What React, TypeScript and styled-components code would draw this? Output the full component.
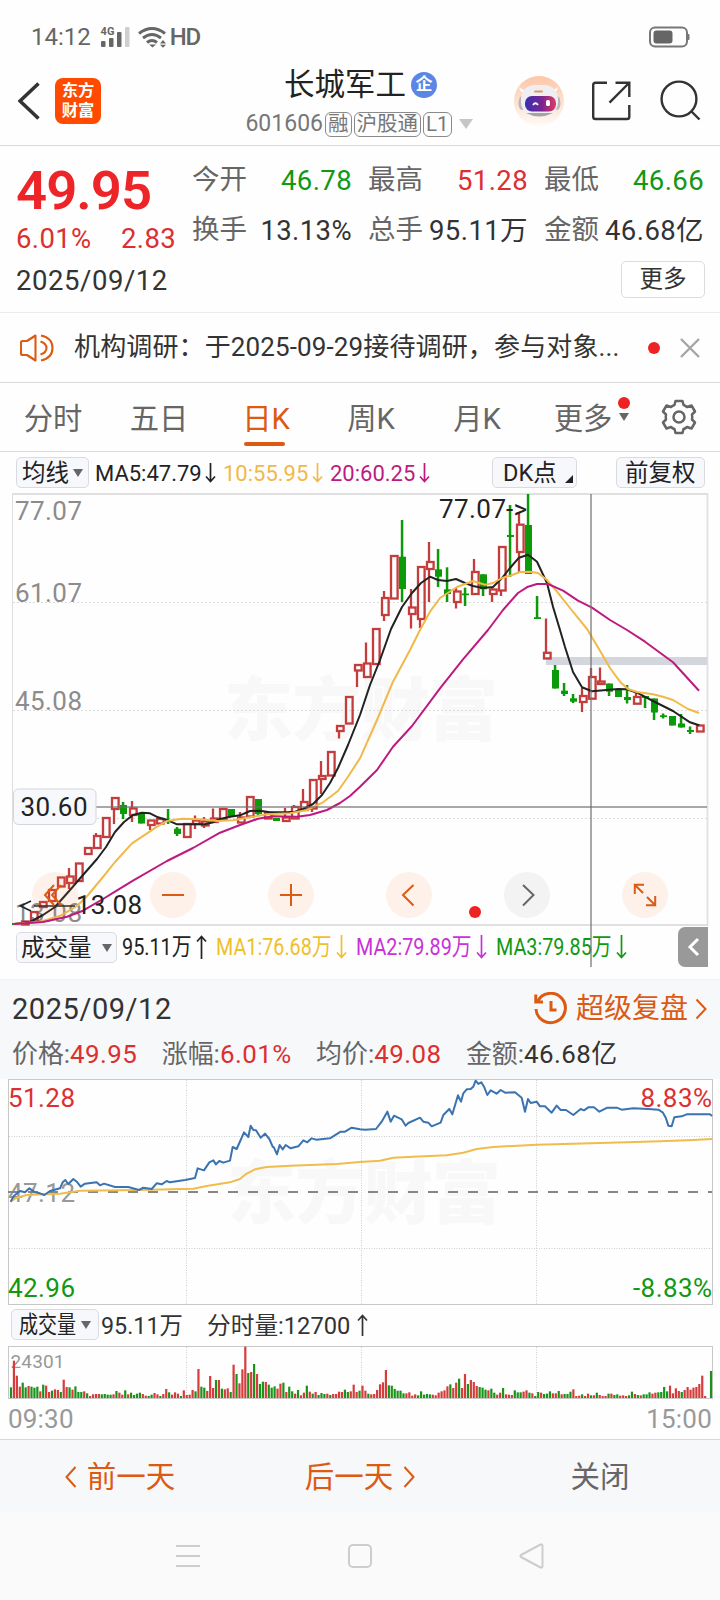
import React from "react";
import styled, { createGlobalStyle, css } from "styled-components";

const ORANGE = "#dc5a12";
const RED = "#dc3030";
const GREEN = "#129812";
const INK = "#333333";
const SUB = "#666666";
const FAINT = "#8c8c8c";
const FONT = `Roboto, "Noto Sans CJK SC", sans-serif`;

const GlobalStyle = createGlobalStyle`
  * { box-sizing: border-box; }
  body { margin: 0; background: #fff; font-family: ${FONT}; color: ${INK}; }
  svg { display: block; flex: none; }
  svg text { font-family: ${FONT}; }
`;

const Screen = styled.main`
  width: 720px;
  height: 1600px;
  display: flex;
  flex-direction: column;
  overflow: hidden;
  background: #fefefe;
`;

/* ---------- status bar ---------- */

const StatusBar = styled.div`
  height: 72px;
  padding: 1px 30px 0 31px;
  display: flex;
  align-items: center;
  color: #666;
  font-size: 24px;
  line-height: 28px;
`;
const StatusIcons = styled.svg`
  margin-left: 9px;
`;
const NetLabel = styled.span`
  margin-left: 2px;
  letter-spacing: -1.2px;
  font-weight: 500;
  flex: 1;
`;

/* ---------- header ---------- */

const Header = styled.header`
  height: 74px;
  border-bottom: 1px solid #d9d9d9;
  display: grid;
  grid-template-columns: 202px 312px 206px;
`;
const HeaderLeft = styled.div`
  display: flex;
  padding: 6px 0 0 18px;
  gap: 15px;
`;
const AppLogo = styled.div`
  width: 46px;
  height: 46px;
  border-radius: 8px;
  background: #ff4a00;
  color: #fff;
  font-size: 16.3px;
  line-height: 19.5px;
  font-weight: 700;
  text-align: center;
  padding-top: 3px;
`;
const TitleBlock = styled.div`
  display: flex;
  flex-direction: column;
  align-items: center;
`;
const TitleRow = styled.div`
  height: 36px;
  margin-top: -5px;
  padding-left: 5px;
  display: flex;
  align-items: center;
  gap: 5px;
  font-size: 30.5px;
  line-height: 36px;
  color: #222;
`;
const Verified = styled.span`
  width: 26px;
  height: 26px;
  border-radius: 50%;
  background: #5b86e6;
  color: #fff;
  font-size: 17px;
  line-height: 25px;
  text-align: center;
  font-weight: 700;
`;
const CodeRow = styled.div`
  height: 26px;
  margin-top: 8px;
  padding-left: 2px;
  display: flex;
  align-items: center;
  gap: 2px;
  font-size: 23px;
  line-height: 26px;
  color: #777;
`;
const Tag = styled.span`
  height: 25px;
  padding: 0 2px;
  border: 1px solid #8a8a8a;
  border-radius: 6px;
  font-size: 20.5px;
  line-height: 23px;
  color: #777;
`;
const HeaderRight = styled.div`
  display: flex;
  align-items: flex-start;
`;

const Triangle = styled.i<{ $w?: number; $h?: number; $c?: string; $ml?: number }>`
  flex: none;
  width: 0;
  height: 0;
  margin-left: ${(p) => p.$ml ?? 0}px;
  border-left: ${(p) => (p.$w ?? 10) / 2}px solid transparent;
  border-right: ${(p) => (p.$w ?? 10) / 2}px solid transparent;
  border-top: ${(p) => p.$h ?? 8}px solid ${(p) => p.$c ?? SUB};
`;

/* ---------- quote ---------- */

const Quote = styled.section`
  height: 167px;
  border-bottom: 1px solid #ebebeb;
  padding: 0 16px;
  display: grid;
  grid-template-columns: 176px 512px;
`;
const PriceCol = styled.div`
  display: flex;
  flex-direction: column;
`;
const Price = styled.div`
  font-size: 54.5px;
  line-height: 60px;
  font-weight: 600;
  letter-spacing: -1px;
  color: #ee2528;
  margin-top: 14px;
`;
const ChangeRow = styled.div`
  display: flex;
  justify-content: space-between;
  width: 160px;
  margin-top: 3px;
  font-size: 27.5px;
  line-height: 32px;
  letter-spacing: 0.35px;
  color: ${RED};
`;
const QuoteDate = styled.div`
  font-size: 27.5px;
  line-height: 32px;
  letter-spacing: 0.55px;
  margin-top: 10px;
`;
const StatsCol = styled.div`
  display: flex;
  flex-direction: column;
  align-items: flex-end;
`;
const Stats = styled.div`
  width: 512px;
  margin-top: 18px;
  display: grid;
  grid-template-columns: repeat(3, 160px);
  column-gap: 16px;
  row-gap: 18px;
`;
const Stat = styled.div`
  height: 32px;
  display: flex;
  justify-content: space-between;
  font-size: 27.5px;
  line-height: 32px;
  white-space: nowrap;
`;
const StatLabel = styled.span`
  color: ${SUB};
`;
const StatValue = styled.span<{ $c?: string }>`
  color: ${(p) => p.$c ?? INK};
  padding-top: 1px;
  letter-spacing: 0.4px;
`;
const MoreButton = styled.button`
  width: 84px;
  height: 37px;
  margin: 15px -1px 0 0;
  padding: 0;
  border: 1px solid #dcdcdc;
  border-radius: 5px;
  background: #fff;
  font: 23.5px/33px ${FONT};
  color: ${INK};
`;

/* ---------- notice ---------- */

const Notice = styled.section`
  height: 70px;
  border-bottom: 1px solid #d9d9d9;
  padding: 0 20px;
  display: flex;
  align-items: center;
`;
const NoticeText = styled.p`
  margin: -2px 0 0 20px;
  width: 574px;
  font-size: 26px;
  line-height: 34px;
  letter-spacing: 0.13px;
  white-space: nowrap;
`;
const Dot = styled.i`
  width: 12px;
  height: 12px;
  border-radius: 50%;
  background: #ee2222;
`;
const CloseIcon = styled.svg`
  margin-left: 20px;
`;

/* ---------- tabs ---------- */

const Tabs = styled.nav`
  height: 69px;
  border-bottom: 1px solid #d9d9d9;
  display: grid;
  grid-template-columns: repeat(6, 106px) 1fr;
`;
const Tab = styled.div<{ $active?: boolean }>`
  position: relative;
  display: flex;
  flex-direction: column;
  align-items: center;
  font-size: 29.3px;
  line-height: 36px;
  padding-top: 18px;
  color: ${(p) => (p.$active ? ORANGE : SUB)};
  ${(p) =>
    p.$active &&
    css`
      padding-left: 2px;
      &::after {
        content: "";
        width: 41px;
        height: 4px;
        margin: 5px 3px 0 0;
        border-radius: 2px;
        background: ${ORANGE};
      }
    `}
`;
const TabMark = styled.span`
  position: absolute;
  left: 88px;
  top: 14px;
  display: flex;
  flex-direction: column;
  align-items: center;
  gap: 4px;
`;
const TabGear = styled.div`
  padding: 16px 0 0 25px;
`;

/* ---------- legends ---------- */

const Legend = styled.div<{ $h: number; $left?: number }>`
  position: relative;
  height: ${(p) => p.$h}px;
  padding-left: ${(p) => p.$left ?? 16}px;
  display: flex;
  align-items: flex-start;
`;
const Chip = styled.button<{ $w: number; $mt: number; $ml?: number; $pad?: number }>`
  flex: none;
  width: ${(p) => p.$w}px;
  height: 31px;
  margin: ${(p) => p.$mt}px 0 0 ${(p) => p.$ml ?? 0}px;
  padding: 0 ${(p) => p.$pad ?? 5}px;
  border: 1px solid #d9dbe1;
  border-radius: 5px;
  background: #f7f8fb;
  display: flex;
  align-items: center;
  justify-content: space-between;
  font: 23.5px/28px ${FONT};
  color: #222;
  white-space: nowrap;
`;
const ChipLabel = styled.span`
  margin-left: 7px;
`;
const Corner = styled.i`
  width: 0;
  height: 0;
  margin-top: 13px;
  border-left: 8px solid transparent;
  border-bottom: 8px solid #222;
`;
const Item = styled.span<{ $w: number; $c: string; $mt: number; $ml?: number; $scale?: number; $size?: number }>`
  flex: none;
  width: ${(p) => p.$w}px;
  margin-top: ${(p) => p.$mt}px;
  margin-left: ${(p) => p.$ml ?? 0}px;
  color: ${(p) => p.$c};
  font-size: ${(p) => p.$size ?? 22}px;
  line-height: 30px;
  white-space: nowrap;
  ${(p) =>
    p.$scale &&
    css`
      transform: scaleX(${p.$scale});
      transform-origin: left center;
    `}
`;
const Squeeze = styled.span`
  width: 56px;
  transform: scaleX(0.81);
  transform-origin: left center;
`;
const ArrowSvg = styled.svg<{ $mt: number; $mr: number }>`
  margin: ${(p) => p.$mt}px ${(p) => p.$mr}px 0 0;
`;

function Arrow({ up, c, mt, mr = 9, h = 20 }: { up?: boolean; c: string; mt: number; mr?: number; h?: number }) {
  const d = up ? `M5.5 ${h} V1.5 M1 6.5 L5.5 1.5 L10 6.5` : `M5.5 0 V${h - 1.5} M1 ${h - 6.5} L5.5 ${h - 1.5} L10 ${h - 6.5}`;
  return (
    <ArrowSvg $mt={mt} $mr={mr} width="11" height={h} fill="none" stroke={c} strokeWidth="1.7">
      <path d={d} />
    </ArrowSvg>
  );
}

/* ---------- candle chart ---------- */

const ChartWrap = styled.div`
  position: relative;
  height: 432px;
`;
const ChartSvg = styled.svg`
  position: relative;
  z-index: 1;
  overflow: visible;
  pointer-events: none;
`;
const Tools = styled.div`
  position: absolute;
  z-index: 2;
  left: 32px;
  right: 52px;
  bottom: 8px;
  display: flex;
  justify-content: space-between;
`;
const Tool = styled.span<{ $muted?: boolean }>`
  width: 46px;
  height: 46px;
  border-radius: 50%;
  background: ${(p) => (p.$muted ? "rgba(120,120,120,.08)" : "rgba(248,130,60,.105)")};
  color: ${(p) => (p.$muted ? SUB : ORANGE)};
`;
const ToolDot = styled(Dot)`
  position: absolute;
  z-index: 2;
  left: 469px;
  bottom: 8px;
`;
const Drawer = styled.span`
  position: absolute;
  left: 678px;
  top: 1px;
  width: 30px;
  height: 40px;
  border-radius: 7px 0 0 7px;
  background: #999;
`;

type Candle = [string, number, number, number?, number?];
// [direction, body top, body bottom, high, low]
const candles: Candle[] = [
  ["g", 923, 925], ["r", 921.5, 924.5], ["r", 912, 922], ["r", 902, 907], ["r", 890, 901],
  ["r", 877.5, 886.5], ["r", 876.5, 883, 868, 889], ["r", 863.5, 881], ["r", 848, 854], ["r", 836, 848, 833],
  ["r", 818, 837], ["r", 798, 809, 0, 824], ["g", 805, 814, 802, 819], ["r", 808.5, 815, 801, 822], ["g", 813.5, 823.5],
  ["r", 820.5, 825, 0, 830], ["r", 819, 823.5], ["g", 820.3, 822, 809, 824], ["g", 828.7, 834, 827, 836], ["r", 824, 837],
  ["r", 820.5, 824, 815.5, 829], ["r", 821.5, 825.5, 817, 828], ["r", 818.5, 822, 808.5], ["r", 809, 819.5], ["g", 809, 816],
  ["r", 817.5, 822.5, 812], ["r", 797, 816.5], ["g", 799, 814, 0, 816], ["r", 813, 818.5], ["g", 818, 821],
  ["r", 817.5, 821, 808], ["r", 807, 818.5, 805], ["r", 802, 810, 789], ["r", 780, 808.5, 0, 812], ["r", 776, 779, 761, 794],
  ["r", 752, 775.5], ["r", 726, 731, 0, 738.5], ["r", 697, 723.5], ["r", 665, 670.5, 0, 687], ["r", 663.5, 677, 642.5],
  ["r", 629, 664], ["r", 598, 615, 591, 621], ["r", 556, 598.5], ["g", 556.7, 589, 520, 602], ["r", 607.5, 614, 589, 628.5],
  ["r", 567, 619, 0, 628], ["r", 562, 569, 542, 602], ["g", 569.3, 576.7, 549, 587], ["g", 589.3, 594, 567.3, 602], ["r", 591.5, 602, 588, 608.5],
  ["g", 593.5, 595.2, 587.7, 606], ["r", 572, 594, 559], ["g", 574.3, 589.3, 0, 596], ["r", 589.5, 594, 587, 602], ["r", 547, 590.5, 0, 596],
  ["g", 535, 537, 505, 577], ["r", 524.7, 552, 512, 573], ["g", 525, 574, 494], ["g", 617.2, 619, 596], ["r", 652.8, 658.5, 618.5],
  ["g", 670, 688.5, 665], ["g", 690.7, 694, 683, 696], ["g", 698.3, 701.7, 694, 703], ["r", 696, 702, 688, 712], ["r", 677, 698.7, 668],
  ["r", 681.5, 684, 667.5], ["g", 683.5, 691.7, 0, 696], ["g", 690, 697], ["g", 697, 700, 685, 703.5], ["r", 697, 703.7, 691],
  ["g", 696, 698, 0, 708], ["g", 698.5, 712.5, 0, 720], ["g", 715.3, 717, 713.5, 718.5], ["g", 716, 725.5], ["g", 723.5, 727.5, 714],
  ["g", 730, 732, 726.5, 734], ["r", 725.5, 731.5, 724],
];

const MA5 =
  "14,924 30,922 43,915 55,907 70,890 83,875 97,859 106,847 115,832 124,822 133,815 142,812.7 150,813.3 158,817.3 168,820.3 177,824.3 205,824.3 213,822.3 220,819 230,816.7 240,815.3 250,811 260,810.7 270,812.3 287,812.3 295,811.7 303,809 313,804 322,795 330,783 338,768 348,745 360,715 370,685 380,660 391,629 402,607 412,593 421,583 430,576.7 438,580 447,581 456,579 465,583 473,586 483,588 493,587 502,578 510,568 519,557.7 528,554.7 537,561.7 547,583 553,606.7 560,630 565,647 573,672 582,687.3 592,691.3 618,689 627,689.3 637,692.7 653,701 673,711 690,722.3 699,725.3";
const MA10 =
  "14,924 40,921.7 60,916 77,906 88,895 103,877 115,862 132,843.3 147,833.3 157,826.7 167,821 182,818.7 200,819.3 217,821 233,820.3 250,817.3 267,814.3 290,813.3 307,810 323,802.3 338,791 348,776.7 360,758.3 377,720 393,681.7 410,650 420,630 430,611.7 440,598 457,587 473,581 485,584.7 493,583 502,578 510,575.7 520,572 530,571.7 538,573 547,580 557,591.7 570,608 587,629 600,650.7 610,668 620,681.7 628,689 637,692 653,694.3 663,696.7 673,700 688,709 699,713";
const MA20 =
  "14,924 43,922 67,916.7 83,910.7 103,899 115,891.7 133,880.7 167,861 193,848 220,832.7 240,825 258,818.7 273,816.3 297,816.7 310,815 327,810 340,803 350,796 360,786.7 377,770 393,746.7 412,726 440,688.3 463,659.3 488,630 503,610 518,593 528,586.7 537,584 548,584 563,590.7 578,600.7 592,607.7 610,620 627,630 645,641.7 673,662.3 699,690.7";

function CandleMark({ c, i }: { c: Candle; i: number }) {
  const [dir, top, bottom, high, low] = c;
  const x = 16 + i * 9;
  const hi = high || top;
  const lo = low || bottom;
  if (dir === "g") {
    return (
      <g fill="#0a9a0a">
        <rect x={x - 2.200} y={hi} width="2.500" height={lo - hi} />
        <rect x={x - 4} y={top} width="7" height={bottom - top} />
      </g>
    );
  }
  return (
    <g fill="none" stroke="#c43c3c" strokeWidth="2.300">
      {hi < top && <path d={`M${x - 1} ${hi} V${top}`} />}
      {lo > bottom && <path d={`M${x - 1} ${bottom} V${lo}`} />}
      <rect x={x - 3} y={top} width="6.6" height={Math.max(bottom - top, 1)} />
    </g>
  );
}

function CandleChart() {
  return (
    <ChartSvg width="720" height="432" viewBox="0 494 720 432">
      <text x="224" y="735" fontSize="69" fontWeight="900" fill="#f8f8f8" textLength="274">东方财富</text>
      <g stroke="#dcdcdc" strokeDasharray="2 2">
        <path d="M13 602.5H707 M13 710.5H707 M13 818.5H707" />
      </g>
      <path d="M12.5 494V925" stroke="#dedede" fill="none" />
      <path d="M12 494H707.5V925H12" stroke="#e0e0e0" strokeWidth="1.8" fill="none" />
      <rect x="546" y="657" width="161" height="8" fill="#d3d6dc" />
      <g fill={FAINT} fontSize="26">
        <text x="15" y="520" textLength="67">77.07</text>
        <text x="15" y="602" textLength="67">61.07</text>
        <text x="15" y="710" textLength="67">45.08</text>
        <text x="15" y="921.5" textLength="67">13.08</text>
      </g>
      {candles.map((c, i) => (
        <CandleMark key={i} c={c} i={i} />
      ))}
      <g fill="none" strokeWidth="2" strokeLinejoin="round">
        <polyline points={MA5} stroke="#222" />
        <polyline points={MA10} stroke="#f0b94a" />
        <polyline points={MA20} stroke="#bd1a80" />
      </g>
      <g fill="#222" fontSize="26">
        <text x="439" y="517.7" textLength="67">77.07</text>
        <text x="506" y="517.7" textLength="21">-&gt;</text>
        <text x="76" y="914" textLength="66">13.08</text>
      </g>
      <path d="M31 901 L20.500 906 L31 911 M34 906H75" stroke="#222" strokeWidth="1.7" fill="none" />
      <g stroke="#6e6e6e" strokeOpacity=".6" strokeWidth="2">
        <path d="M96 807H707" />
        <path d="M591 494V967" />
      </g>
      <rect x="13.500" y="789" width="82.500" height="35.500" rx="5" fill="#f7f8fb" stroke="#d4d6dc" />
      <text x="20.500" y="815.5" fontSize="26" fill="#222" textLength="67">30.60</text>
    </ChartSvg>
  );
}

const toolIcons: { d: string; muted?: boolean }[] = [
  { d: "M22 13 L13 23 L22 33 M29 13 L20 23 L29 33" },
  { d: "M12 23H34" },
  { d: "M12 23H34 M23 12V34" },
  { d: "M27.500 13 L17 23 L27.500 33.500" },
  { d: "M19 13 L29.500 23 L19 33.500", muted: true },
  { d: "M12.800 22V12.800H22 M13 13L21 21 M33.200 24V33.200H24 M33 33L25 25" },
];

/* ---------- replay section ---------- */

const ReplayHead = styled.section`
  height: 100px;
  padding: 10px 13px 0 12px;
  background: #f7f8fa;
  border-top: 1px solid #f2f2f4;
`;
const ReplayTop = styled.div`
  height: 38px;
  display: flex;
  align-items: center;
`;
const ReplayDate = styled.span`
  flex: 1;
  font-size: 29px;
  letter-spacing: 0.55px;
`;
const ReplayLink = styled.span`
  display: flex;
  align-items: center;
  gap: 9px;
  font-size: 28px;
  line-height: 36px;
  color: ${ORANGE};
`;
const LinkChevron = styled.svg`
  margin-left: -2px;
`;
const ReplayStats = styled.div`
  margin-top: 8px;
  display: flex;
  gap: 24.5px;
  font-size: 25.9px;
  line-height: 36px;
  color: ${SUB};
  white-space: nowrap;
`;
const Val = styled.span<{ $c?: string }>`
  color: ${(p) => p.$c ?? INK};
  letter-spacing: 0.45px;
`;

// Series are given at three units per pixel.
const priceLine =
  "32,680 42,662 60,648 75,652 88,640 105,652 120,655 133,660 150,648 180,640 188,622 196,615 205,627 220,612 232,622 242,635 255,626 290,622 300,631 312,626 345,636 385,636 417,645 430,638 455,642 470,625 485,628 500,618 510,622 555,615 585,609 593,580 612,586 628,562 640,556 648,568 658,558 670,563 690,557 698,516 710,522 722,495 732,472 745,486 752,452 760,465 768,466 782,488 795,476 808,492 818,515 822,518 831,538 839,510 848,523 857,510 872,520 895,514 910,496 922,502 935,490 948,494 990,490 1022,470 1035,470 1055,458 1080,463 1095,464 1128,462 1145,440 1162,410 1172,440 1182,422 1205,433 1217,452 1225,444 1260,428 1270,440 1285,443 1295,454 1322,443 1330,420 1348,402 1357,418 1374,361 1383,380 1390,355 1400,343 1412,342 1420,335 1427,317 1435,327 1444,322 1452,335 1462,360 1472,346 1490,356 1502,345 1515,353 1545,352 1565,368 1575,410 1584,372 1592,384 1610,380 1620,394 1635,394 1655,413 1670,392 1682,405 1698,405 1720,420 1742,402 1752,406 1765,397 1782,397 1798,410 1822,398 1850,398 1865,404 1900,400 1945,402 1975,404 1988,412 1998,430 2005,452 2015,454 2023,427 2045,424 2060,418 2130,418 2136,423";
const avgLine =
  "32,680 50,668 80,660 180,656 240,647 420,645 580,641 620,633 690,622 720,612 735,599 765,583 800,576 870,572 1010,567 1080,561 1140,557 1180,548 1240,545 1340,541 1390,533 1430,522 1480,516 1610,509 1880,502 1980,499 2080,495 2136,492";

function IntradayChart() {
  return (
    <svg width="720" height="226" viewBox="0 1079 720 226">
      <text x="227" y="1217.5" fontSize="69" fontWeight="900" fill="#f8f8f8" textLength="274">东方财富</text>
      <g stroke="#cfcfcf" strokeDasharray="1 1.5">
        <path d="M9 1136.5H712 M9 1248.5H712 M186.500 1080V1304 M361.500 1080V1304 M536.500 1080V1304" />
      </g>
      <rect x="8.500" y="1079.5" width="704" height="225" fill="none" stroke="#c8c8c8" />
      <g fontSize="26">
        <text x="8" y="1106.7" fill={RED} textLength="67">51.28</text>
        <text x="8" y="1202" fill="#999" textLength="67">47.12</text>
        <text x="8" y="1296.7" fill={GREEN} textLength="67">42.96</text>
        <text x="640.500" y="1106.7" fill={RED} textLength="71.500">8.83%</text>
        <text x="633" y="1296.7" fill={GREEN} textLength="79">-8.83%</text>
      </g>
      <path d="M8 1192H712" stroke="#868686" strokeWidth="2" strokeDasharray="10 10" />
      <g transform="translate(0 975) scale(.33333)" fill="none" strokeWidth="6" strokeLinejoin="round">
        <polyline points={avgLine} stroke="#f0bc4c" />
        <polyline points={priceLine} stroke="#3a73b0" />
      </g>
    </svg>
  );
}

const volumes =
  "g32 r112 r67 r34 g46 g32 r36 g34 g31 g34 r20 g40 r37 r18 g22 r26 r24 g18 r55 r33 g32 r25 g35 g18 g18 r20 g14 r6 r11 r12 r12 g11 g12 g10 g10 r11 g21 r16 r10 g23 r11 g16 g9 g13 g16 r12 r7 g6 g10 r15 r11 g6 r12 r27 g17 r10 r17 r13 g6 r23 r9 r10 r24 g20 r87 g34 g31 r21 r66 r30 g54 r54 g28 r26 r29 g18 r100 g72 r44 r86 r154 g75 r78 g102 r72 g42 g49 r48 g40 g31 g35 r28 r43 g46 r18 g34 g20 r13 g24 r8 r16 g37 r19 g13 r18 g9 g15 g12 r13 g9 r12 r12 r19 r18 g25 g18 r20 r40 r18 g22 r37 r22 g13 r11 r12 r24 r41 r47 r84 g38 g37 g27 g22 g22 g14 r14 r17 r7 r11 g8 g20 g10 g12 g11 r10 r8 r16 r20 r23 r35 g41 r30 r46 g58 r30 r72 g42 r54 r48 r36 g33 g31 g25 r23 g28 g16 r10 r16 g30 r11 r10 r9 g23 g17 g17 r19 r23 g16 r14 g6 g18 r16 g12 g13 g20 r14 r14 g21 r11 g12 g12 g19 r26 r6 r7 g11 r6 r13 g8 r8 g16 r9 r6 r6 g13 r13 g9 g11 r7 r8 r6 g8 g19 r12 g9 r8 g11 g11 g17 r13 r16 g17 g18 g33 g20 r37 r14 r29 r21 g18 r24 r33 r25 r31 r33 r42 r67 r6 r0 g81".split(" ");

function VolumeChart() {
  return (
    <svg width="720" height="54" viewBox="0 1346 720 54">
      <path d="M186.500 1347V1398 M361.500 1347V1398 M536.500 1347V1398" stroke="#cfcfcf" strokeDasharray="1 1.5" />
      <rect x="8.500" y="1346.5" width="704" height="52" fill="none" stroke="#c8c8c8" />
      <text x="10.500" y="1368" fontSize="19" fill="#999" textLength="54">24301</text>
      {volumes.map((v, i) => {
        const h = Number(v.slice(1)) / 3;
        return <rect key={i} x={9.900 + i * 2.929} y={1398 - h} width="2.200" height={h} fill={v[0] === "r" ? "#d63c3c" : "#189418"} />;
      })}
    </svg>
  );
}

const AxisRow = styled.div`
  height: 39px;
  padding: 2px 8px 0;
  display: flex;
  justify-content: space-between;
  font-size: 26px;
  line-height: 34px;
  letter-spacing: 0.2px;
  color: #999;
`;

/* ---------- bottom ---------- */

const DayBar = styled.footer`
  height: 73px;
  padding-top: 2px;
  border-top: 1px solid #d6d8db;
  background: #f7f8fa;
  display: grid;
  grid-template-columns: 240px 240px 240px;
  font-size: 29.5px;
  line-height: 36px;
`;
const DayAction = styled.span<{ $muted?: boolean }>`
  display: flex;
  align-items: center;
  justify-content: center;
  gap: 10px;
  color: ${(p) => (p.$muted ? SUB : ORANGE)};
`;
const SystemNav = styled.div`
  height: 88px;
  padding: 0 176px;
  background: #fafafa;
  display: flex;
  align-items: center;
  justify-content: space-between;
`;

export default function App() {
  return (
    <Screen>
      <GlobalStyle />
      <StatusBar>
        <span>14:12</span>
        <StatusIcons width="68" height="22" viewBox="100 25 68 22">
          <text x="100.500" y="34" fontSize="11" fontWeight="700" fill="#666" textLength="14">4G</text>
          <g fill="#666">
            <rect x="101" y="40" width="4.500" height="6" rx="1" />
            <rect x="109" y="37" width="4.500" height="9" rx="1" />
            <rect x="117" y="31" width="4.500" height="15" rx="1" />
            <rect x="125" y="26" width="4.500" height="20" rx="1" fill="#cfcfcf" />
            <path d="M149 43.500h7l-3.500 3z" />
            <path d="M160 42.500l3-3.500 3 3.500z M160 43.800l3 3 3-3z" />
          </g>
          <g fill="none" stroke="#666" strokeWidth="3">
            <path d="M139 32.500Q152 22.500 165 32.500" />
            <path d="M143 37Q152 30 161 37" />
            <path d="M147 41.500Q152 37.500 157 41.500" />
          </g>
        </StatusIcons>
        <NetLabel>HD</NetLabel>
        <svg width="41" height="22" viewBox="0 0 41 22">
          <rect x="1" y="1.500" width="37" height="19" rx="5" fill="none" stroke="#777" strokeWidth="2" />
          <rect x="4.500" y="4.500" width="19" height="13" rx="3" fill="#666" />
          <path d="M38.500 8.500h1.500v5h-1.500z" fill="#777" stroke="#777" />
        </svg>
      </StatusBar>

      <Header>
        <HeaderLeft>
          <svg width="22" height="46" viewBox="18 78 22 46" fill="none" stroke="#333" strokeWidth="3.600">
            <path d="M38.500 83.500 L20 101 L38.500 118.500" />
          </svg>
          <AppLogo>
            东方
            <br />
            财富
          </AppLogo>
        </HeaderLeft>
        <TitleBlock>
          <TitleRow>
            长城军工<Verified>企</Verified>
          </TitleRow>
          <CodeRow>
            <span>601606</span>
            <Tag>融</Tag>
            <Tag>沪股通</Tag>
            <Tag>L1</Tag>
            <Triangle $w={14} $h={10} $c="#c6c6c6" $ml={5} />
          </CodeRow>
        </TitleBlock>
        <HeaderRight>
          <svg width="206" height="60" viewBox="514 72 206 60">
            <defs>
              <linearGradient id="halo" x1="0" y1="0" x2="0" y2="1">
                <stop offset="0" stopColor="#fdc6a6" />
                <stop offset="1" stopColor="#fffaf7" />
              </linearGradient>
              <linearGradient id="visor" x1="0" y1="0" x2="1" y2="0">
                <stop offset="0" stopColor="#3a2fb0" />
                <stop offset=".55" stopColor="#7a2590" />
                <stop offset="1" stopColor="#e23a62" />
              </linearGradient>
            </defs>
            <circle cx="539" cy="101" r="25" fill="url(#halo)" />
            <path d="M519 87q1 6 8 7l6-5q-10 3-14-2z M558 87q-1 6-8 7l-6-5q10 3 14-2z" fill="#fff" />
            <ellipse cx="522" cy="103" rx="3.500" ry="7" fill="#b9b5bd" />
            <ellipse cx="557" cy="103" rx="3.500" ry="7" fill="#b9b5bd" />
            <rect x="521" y="85" width="37" height="31" rx="14" fill="#f1eef1" />
            <path d="M526 113q13 7 27 0z" fill="#a6a2aa" />
            <rect x="534" y="90.500" width="9" height="2" rx="1" fill="#e0965c" />
            <rect x="525" y="96" width="31" height="15.500" rx="7" fill="url(#visor)" />
            <path d="M533 105q2.500-3.500 5 0" fill="none" stroke="#fff" strokeWidth="1.800" />
            <rect x="546" y="100" width="4" height="6" rx="1.500" fill="#fff" />
            <g fill="none" stroke="#333" strokeWidth="2.400">
              <path d="M607 82.800H595.500a2.300 2.300 0 0 0-2.300 2.300V116.700a2.300 2.300 0 0 0 2.300 2.300H627a2.300 2.300 0 0 0 2.300-2.300V105" />
              <path d="M615.500 82.800H629.300V97 M629 83 L609.500 102.700" />
              <circle cx="679" cy="99" r="17.400" />
              <path d="M691.500 111.500 L699.500 119.500" />
            </g>
          </svg>
        </HeaderRight>
      </Header>

      <Quote>
        <PriceCol>
          <Price>49.95</Price>
          <ChangeRow>
            <span>6.01%</span>
            <span>2.83</span>
          </ChangeRow>
          <QuoteDate>2025/09/12</QuoteDate>
        </PriceCol>
        <StatsCol>
          <Stats>
            <Stat><StatLabel>今开</StatLabel><StatValue $c={GREEN}>46.78</StatValue></Stat>
            <Stat><StatLabel>最高</StatLabel><StatValue $c={RED}>51.28</StatValue></Stat>
            <Stat><StatLabel>最低</StatLabel><StatValue $c={GREEN}>46.66</StatValue></Stat>
            <Stat><StatLabel>换手</StatLabel><StatValue>13.13%</StatValue></Stat>
            <Stat><StatLabel>总手</StatLabel><StatValue>95.11万</StatValue></Stat>
            <Stat><StatLabel>金额</StatLabel><StatValue>46.68亿</StatValue></Stat>
          </Stats>
          <MoreButton>更多</MoreButton>
        </StatsCol>
      </Quote>

      <Notice>
        <svg width="34" height="30" viewBox="0 0 34 30" fill="none" stroke={ORANGE} strokeWidth="2.100">
          <path d="M15.500 2.500V27.500L7 22H2.500Q1 22 1 20.500V9.500Q1 8 2.500 8H7Z" strokeLinejoin="round" />
          <path d="M20.500 8.500Q26.500 10.500 26.500 15T20.500 21.500" />
          <path d="M21 2.500Q32.500 5 32.500 15T21 27.500" />
        </svg>
        <NoticeText>机构调研：于2025-09-29接待调研，参与对象...</NoticeText>
        <Dot />
        <CloseIcon width="20" height="20" viewBox="0 0 20 20" stroke="#a6a6a6" strokeWidth="2.400">
          <path d="M1 1L19 19 M19 1L1 19" />
        </CloseIcon>
      </Notice>

      <Tabs>
        <Tab>分时</Tab>
        <Tab>五日</Tab>
        <Tab $active>日K</Tab>
        <Tab>周K</Tab>
        <Tab>月K</Tab>
        <Tab>
          更多
          <TabMark>
            <Dot />
            <Triangle $w={10} $h={8} />
          </TabMark>
        </Tab>
        <TabGear>
          <svg width="36" height="36" viewBox="-18 -18 36 36" fill="none" stroke={SUB} strokeWidth="2.500" strokeLinejoin="round">
            <path d="M-3.500-16H3.500L4.500-12Q6.500-11.500 8-10L12.500-11.500L16-5.500L13-2.500Q13.500 0 13 2.500L16 5.500L12.500 11.500L8 10Q6.500 11.500 4.500 12L3.500 16H-3.500L-4.500 12Q-6.500 11.500-8 10L-12.500 11.500L-16 5.500L-13 2.500Q-13.500 0-13-2.500L-16-5.500L-12.500-11.500L-8-10Q-6.500-11.500-4.500-12Z" />
            <circle r="5.500" />
          </svg>
        </TabGear>
      </Tabs>

      <Legend $h={42}>
        <Chip $w={73} $mt={5}>
          均线
          <Triangle />
        </Chip>
        <Item $w={110} $c="#222" $mt={7} $ml={6}>MA5:47.79</Item>
        <Arrow c="#222" mt={11} mr={7} />
        <Item $w={89} $c="#f0b94a" $mt={7}>10:55.95</Item>
        <Arrow c="#f0b94a" mt={11} mr={7} />
        <Item $w={89} $c="#bd1a80" $mt={7}>20:60.25</Item>
        <Arrow c="#bd1a80" mt={11} mr={0} />
        <Chip $w={85} $mt={5} $ml={62} $pad={3}>
          <ChipLabel>DK点</ChipLabel>
          <Corner />
        </Chip>
        <Chip $w={89} $mt={5} $ml={39} $pad={8}>前复权</Chip>
      </Legend>

      <ChartWrap>
        <CandleChart />
        <Tools>
          {toolIcons.map((t) => (
            <Tool key={t.d} $muted={t.muted}>
              <svg width="46" height="46" fill="none" stroke="currentColor" strokeWidth="2">
                <path d={t.d} />
              </svg>
            </Tool>
          ))}
        </Tools>
        <ToolDot />
      </ChartWrap>

      <Legend $h={53}>
        <Chip $w={101} $mt={6} $pad={4}>
          成交量
          <Triangle />
        </Chip>
        <Item $w={74} $c="#222" $mt={6} $ml={5} $scale={0.825} $size={24}>95.11万</Item>
        <Arrow up c="#222" mt={9} mr={9} h={24} />
        <Item $w={120} $c="#efc02c" $mt={6} $scale={0.823} $size={24}>MA1:76.68万</Item>
        <Arrow c="#efc02c" mt={9} mr={9} h={24} />
        <Item $w={120} $c="#c832d6" $mt={6} $scale={0.823} $size={24}>MA2:79.89万</Item>
        <Arrow c="#c832d6" mt={9} mr={9} h={24} />
        <Item $w={120} $c={GREEN} $mt={6} $scale={0.823} $size={24}>MA3:79.85万</Item>
        <Arrow c={GREEN} mt={9} mr={0} h={24} />
        <Drawer>
          <svg width="30" height="40" fill="none" stroke="#fff" strokeWidth="3">
            <path d="M20 12L12 20L20 28" />
          </svg>
        </Drawer>
      </Legend>

      <ReplayHead>
        <ReplayTop>
          <ReplayDate>2025/09/12</ReplayDate>
          <ReplayLink>
            <svg width="34" height="34" viewBox="0 0 34 34" fill="none" stroke={ORANGE} strokeWidth="3">
              <path d="M4.500 9.500A14.700 14.700 0 1 1 3 17" />
              <path d="M2.800 2.500V10H10" />
              <path d="M18 9V18H23.500" />
            </svg>
            超级复盘
            <LinkChevron width="12" height="22" fill="none" stroke={ORANGE} strokeWidth="2">
              <path d="M1.500 1.500L10.500 11L1.500 20.500" />
            </LinkChevron>
          </ReplayLink>
        </ReplayTop>
        <ReplayStats>
          <span>价格:<Val $c={RED}>49.95</Val></span>
          <span>涨幅:<Val $c={RED}>6.01%</Val></span>
          <span>均价:<Val $c={RED}>49.08</Val></span>
          <span>金额:<Val>46.68亿</Val></span>
        </ReplayStats>
      </ReplayHead>

      <IntradayChart />

      <Legend $h={41} $left={11}>
        <Chip $w={88} $mt={4} $pad={7}>
          <Squeeze>成交量</Squeeze>
          <Triangle />
        </Chip>
        <Item $w={106} $c={INK} $mt={6} $ml={2} $size={23.3}>95.11万</Item>
        <Item $w={150} $c={INK} $mt={6} $size={23.7}>分时量:12700</Item>
        <Arrow up c={INK} mt={9} h={22} />
      </Legend>

      <VolumeChart />
      <AxisRow>
        <span>09:30</span>
        <span>15:00</span>
      </AxisRow>

      <DayBar>
        <DayAction>
          <svg width="12" height="22" fill="none" stroke={ORANGE} strokeWidth="2">
            <path d="M10.500 1L1.500 11L10.500 21" />
          </svg>
          前一天
        </DayAction>
        <DayAction>
          后一天
          <svg width="12" height="22" fill="none" stroke={ORANGE} strokeWidth="2">
            <path d="M1.500 1L10.500 11L1.500 21" />
          </svg>
        </DayAction>
        <DayAction $muted>关闭</DayAction>
      </DayBar>
      <SystemNav>
        <svg width="25" height="24" stroke="#cdcdcd" strokeWidth="2">
          <path d="M0 2H24 M0 12H24 M0 22H24" />
        </svg>
        <svg width="24" height="24" fill="none" stroke="#cdcdcd" strokeWidth="2">
          <rect x="1" y="1" width="22" height="22" rx="4" />
        </svg>
        <svg width="25" height="28" fill="none" stroke="#cdcdcd" strokeWidth="2" strokeLinejoin="round">
          <path d="M2 13 Q1 14 2 15 L21.500 25.500Q23.500 26 23.500 24V4Q23.500 2 21.500 2.500Z" />
        </svg>
      </SystemNav>
    </Screen>
  );
}
